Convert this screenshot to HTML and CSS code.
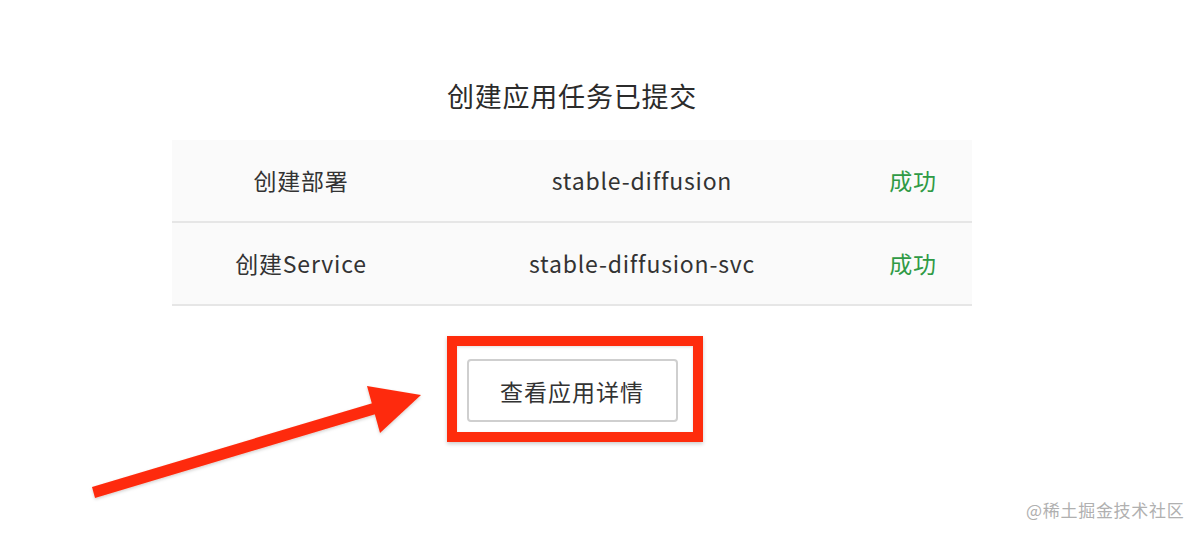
FILE: index.html
```html
<!DOCTYPE html>
<html lang="zh">
<head>
<meta charset="utf-8">
<link rel="stylesheet" href="styles.css">
</head>
<body>
<div class="page">
  <div class="panel">
    <h1 class="title">创建应用任务已提交</h1>
    <div class="table">
      <div class="row">
        <div class="cell c1">创建部署</div>
        <div class="cell c2">stable-diffusion</div>
        <div class="cell c3 ok">成功</div>
      </div>
      <div class="row">
        <div class="cell c1">创建Service</div>
        <div class="cell c2">stable-diffusion-svc</div>
        <div class="cell c3 ok">成功</div>
      </div>
    </div>
    <div class="actions">
      <div class="btn-wrap">
        <button class="btn">查看应用详情</button>
        <div class="highlight"></div>
      </div>
    </div>
  </div>
  <svg class="arrow" width="1204" height="538" viewBox="0 0 1204 538">
    <defs>
      <filter id="sh" x="-10%" y="-10%" width="120%" height="130%">
        <feDropShadow dx="0" dy="1.5" stdDeviation="1.5" flood-color="#000" flood-opacity="0.18"/>
      </filter>
    </defs>
    <g filter="url(#sh)" fill="#fe2c0c">
      <polygon points="92,487 95,498 376,414 373,403"/>
      <polygon points="367,386 421,395 380,433"/>
    </g>
  </svg>
  <div class="watermark">@稀土掘金技术社区</div>
</div>
</body>
</html>
```
FILE: styles.css
```css
* { box-sizing: border-box; }
html, body { margin: 0; padding: 0; background: #fff; }
body {
  font-family: "Noto Sans CJK SC", "Noto Sans", "Liberation Sans", sans-serif;
  color: #333;
}
.page {
  position: relative;
  width: 1204px;
  height: 538px;
  overflow: hidden;
}
.panel {
  width: 800px;
  margin-left: 172px;
  padding-top: 76px;
}
.title {
  margin: 0;
  font-size: 27px;
  font-weight: 400;
  line-height: 40px;
  text-align: center;
  color: #2b2b2b;
  letter-spacing: 0.8px;
}
.table {
  margin-top: 24px;
}
.row {
  display: flex;
  height: 83px;
  padding-bottom: 2px;
  background: #fafafa;
  border-bottom: 2px solid #e6e6e6;
  align-items: center;
}
.cell {
  font-size: 23px;
  letter-spacing: 0.8px;
  text-align: center;
  color: #333;
}
.c1 { width: 258px; }
.c2 { width: 424px; }
.c3 { width: 118px; }
.ok { color: #2f9a45; }
.actions {
  display: flex;
  justify-content: center;
  margin-top: 53px;
}
.btn-wrap {
  position: relative;
}
.btn {
  display: block;
  width: 211px;
  height: 63px;
  background: #fff;
  border: 2px solid #cfcfcf;
  border-radius: 4px;
  font-family: "Noto Sans CJK SC", "Noto Sans", sans-serif;
  font-size: 23px;
  letter-spacing: 1px;
  color: #333;
  padding: 0;
}
.highlight {
  position: absolute;
  left: -20px;
  top: -23px;
  width: 256px;
  height: 106px;
  border: 10px solid #fe2c0c;
  box-shadow: 0 2px 4px rgba(0,0,0,0.2), inset 0 1px 3px rgba(0,0,0,0.12);
}
.arrow {
  position: absolute;
  left: 0;
  top: 0;
  pointer-events: none;
}
.watermark {
  position: absolute;
  left: 1026px;
  top: 498px;
  font-size: 17px;
  letter-spacing: 0.7px;
  line-height: 24px;
  color: #b0b0b0;
}
```
